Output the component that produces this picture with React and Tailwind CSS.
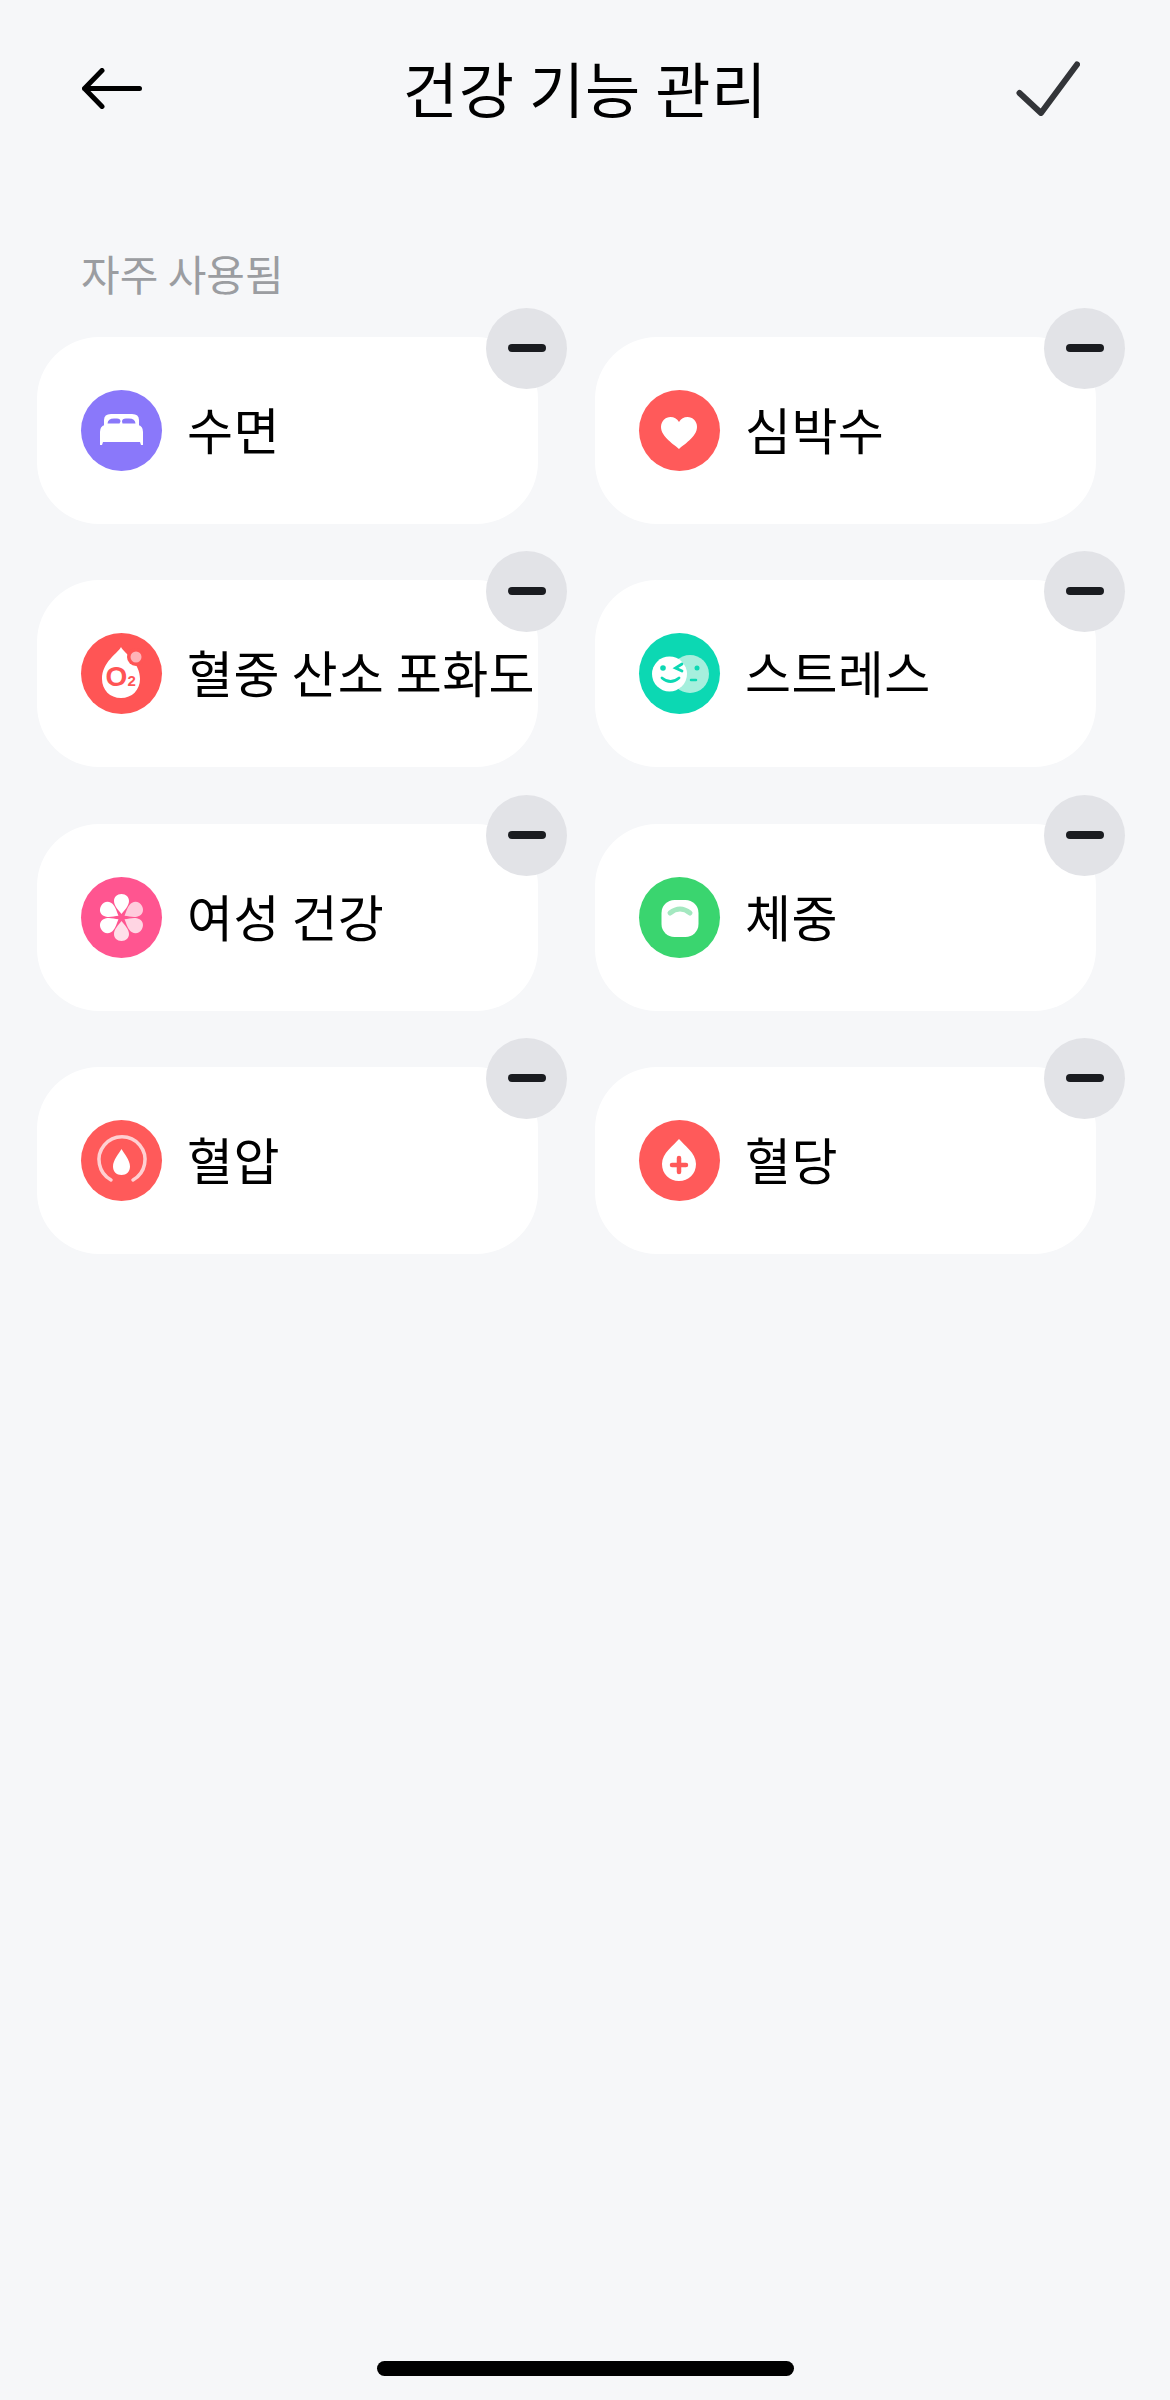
import React from "react";

const BedIcon = (props) => (
  <svg {...props} viewBox="0 0 81 81">
    <path fill="#fff" d="M23 36V30Q23 24 30 24H51Q58 24 58 30V36Z" />
    <path fill="#8a78fa" d="M26.500 33.500Q27 28.500 33 28.500H36Q39.500 28.500 39.500 31.500L38.500 33.500ZM41.500 33.500L41 31.500Q41 28.500 45 28.500H48Q54 28.500 54.500 33.500Z" />
    <path fill="#fff" d="M24 35H57Q62 36 62 42V55H60L59 52H22L21 55H19V42Q19 36 24 35Z" />
  </svg>
);

const HeartIcon = (props) => (
  <svg {...props} viewBox="0 0 81 81">
    <path fill="#fff" d="M40 59C36 55 22 47 22 37C22 31 26.500 27 31.500 27C35 27 38 28.500 40 32C42 28.500 45 27 48.500 27C53.500 27 58 31 58 37C58 47 44 55 40 59Z" />
  </svg>
);

const OxygenIcon = (props) => (
  <svg {...props} viewBox="0 0 81 81">
    <path fill="#fff" d="M40 14C37 20 21 29 21 46C21 57 29 65 40 65C51 65 59 57 59 46C59 29 43 20 40 14Z" />
    <circle cx="55" cy="24" r="9" fill="#ff5555" />
    <circle cx="55" cy="24" r="5.500" fill="#ffb3b8" />
    <text x="24.500" y="53" fontSize="28" fontWeight="700" fill="#ff5555" fontFamily='"Liberation Sans", sans-serif'>O</text>
    <text x="46.500" y="53" fontSize="15" fontWeight="700" fill="#ff5555" fontFamily='"Liberation Sans", sans-serif'>2</text>
  </svg>
);

const StressIcon = (props) => (
  <svg {...props} viewBox="0 0 81 81">
    <circle cx="51" cy="41" r="19" fill="#a6efdd" />
    <circle cx="30.500" cy="41" r="17.500" fill="#fff" />
    <circle cx="24" cy="35" r="2.800" fill="#0cd8b3" />
    <path fill="none" stroke="#0cd8b3" strokeWidth="2.800" strokeLinecap="round" d="M43 31L36.500 35L43 38M23 45Q31.500 52 40 45" />
    <circle cx="58" cy="35" r="2.500" fill="#0cd8b3" />
    <path fill="none" stroke="#0cd8b3" strokeWidth="2.500" strokeLinecap="round" d="M52 47H57" />
  </svg>
);

const FlowerIcon = (props) => {
  const petals = [
    { angle: 0, fill: "#fff" },
    { angle: 60, fill: "#ffcbdc" },
    { angle: 120, fill: "#ffd5e3" },
    { angle: 180, fill: "#ffdfe9" },
    { angle: 240, fill: "#fff" },
    { angle: 300, fill: "#fff" },
  ];
  return (
    <svg {...props} viewBox="0 0 81 81">
      {petals.map((p) => (
        <path
          key={p.angle}
          fill={p.fill}
          transform={`rotate(${p.angle} 40.500 40.500)`}
          d="M40.500 37C37.500 33 33 29 33 24C33 20 36 17 40.500 17C45 17 48 20 48 24C48 29 43.500 33 40.500 37Z"
        />
      ))}
    </svg>
  );
};

const ScaleIcon = (props) => (
  <svg {...props} viewBox="0 0 81 81">
    <rect x="22.500" y="23" width="37" height="37" rx="13" fill="#fff" />
    <path fill="none" stroke="#a4e8c0" strokeWidth="5" strokeLinecap="round" d="M31 36Q41 28 51 36" />
  </svg>
);

const PressureIcon = (props) => (
  <svg {...props} viewBox="0 0 81 81">
    <path fill="none" stroke="#ffd0d2" strokeWidth="3.500" strokeLinecap="round" d="M30 60A23 23 0 1 1 52 60" />
    <path fill="#fff" d="M40.500 29C38 33.500 32 40 32 46.500C32 51.500 35.500 55 40.500 55C45.500 55 49 51.500 49 46.500C49 40 43 33.500 40.500 29Z" />
  </svg>
);

const GlucoseIcon = (props) => (
  <svg {...props} viewBox="0 0 81 81">
    <path fill="#fff" d="M40 19C35 25 23 33 23 44C23 54 30.500 61 40 61C49.500 61 57 54 57 44C57 33 45 25 40 19Z" />
    <path fill="none" stroke="#ff5a5a" strokeWidth="4.500" strokeLinecap="round" d="M40 38V52M33 45H47" />
  </svg>
);

const items = [
  { label: "수면", color: "bg-[#8a78fa]", Icon: BedIcon },
  { label: "심박수", color: "bg-[#ff5a5a]", Icon: HeartIcon },
  { label: "혈중 산소 포화도", color: "bg-[#ff5555]", Icon: OxygenIcon },
  { label: "스트레스", color: "bg-[#0cd8b3]", Icon: StressIcon },
  { label: "여성 건강", color: "bg-[#ff5590]", Icon: FlowerIcon },
  { label: "체중", color: "bg-[#3ad56f]", Icon: ScaleIcon },
  { label: "혈압", color: "bg-[#ff5a5a]", Icon: PressureIcon },
  { label: "혈당", color: "bg-[#ff5a5a]", Icon: GlucoseIcon },
];

const FeatureCard = ({ label, color, Icon }) => (
  <div className="relative flex h-[187px] items-center rounded-[62px] bg-white pl-[44px]">
    <div className={`h-[81px] w-[81px] shrink-0 rounded-full ${color}`}>
      <Icon className="h-full w-full" />
    </div>
    <span className="mb-[5px] ml-[25px] whitespace-nowrap text-[50px] leading-none tracking-[0.4px] text-black">{label}</span>
    <button className="absolute -right-[29px] -top-[29px] flex h-[81px] w-[81px] items-center justify-center rounded-full bg-[#e2e3e7] pb-[1px]">
      <span className="h-[8px] w-[38px] rounded-full bg-[#1a1c20]" />
    </button>
  </div>
);

export default function App() {
  return (
    <div className="relative h-[2400px] w-[1170px] overflow-hidden bg-[#f6f7f9] font-['Noto_Sans_CJK_KR',sans-serif]">
      <header className="grid h-[176px] grid-cols-[1fr_auto_1fr] items-center px-[82px]">
        <svg className="h-[41px] w-[60px]" viewBox="0 0 60 41" fill="none" stroke="#000" strokeWidth="5" strokeLinecap="round" strokeLinejoin="round">
          <path d="M20 2.500L2.500 20.500L20 38.500M2.500 20.500H57.500" />
        </svg>
        <h1 className="mb-[3px] text-[60px] font-normal leading-none tracking-[0.8px] text-black">건강 기능 관리</h1>
        <svg className="mr-[8px] h-[55px] w-[64px] justify-self-end" viewBox="0 0 64 55" fill="none" stroke="#333539" strokeWidth="6" strokeLinecap="round" strokeLinejoin="round">
          <path d="M3.500 32L25 52L61 3.500" />
        </svg>
      </header>
      <p className="ml-[81px] mt-[75px] text-[42px] leading-[44px] text-[#9b9da1]">자주 사용됨</p>
      <div className="ml-[37px] mt-[42px] grid grid-cols-[501px_501px] gap-x-[57px] gap-y-[56.300px]">
        {items.map((item) => (
          <FeatureCard key={item.label} {...item} />
        ))}
      </div>
      <div className="absolute bottom-[24px] left-[377px] h-[15px] w-[417px] rounded-full bg-black" />
    </div>
  );
}
